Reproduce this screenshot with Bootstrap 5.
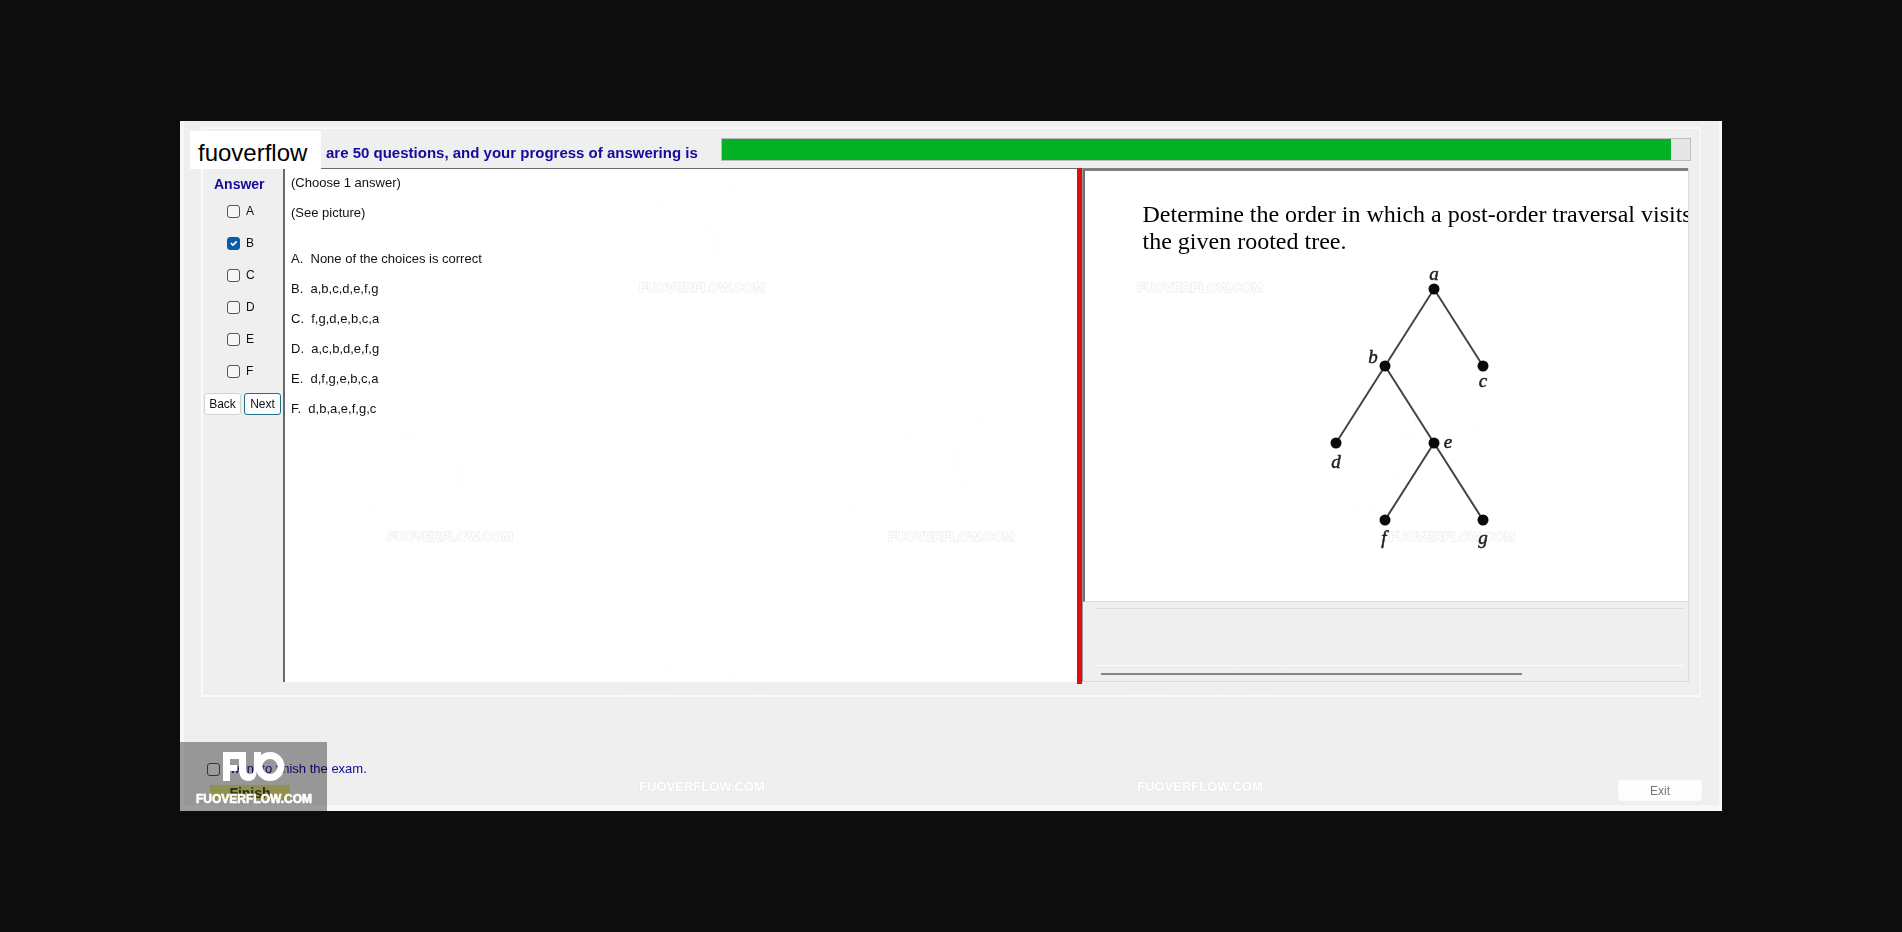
<!DOCTYPE html>
<html lang="en">
<head>
<meta charset="utf-8">
<meta name="viewport" content="width=device-width, initial-scale=1">
<title>Exam client</title>
<link href="https://cdn.jsdelivr.net/npm/bootstrap@5.3.0/dist/css/bootstrap.min.css" rel="stylesheet">
<style>
  body { background: #0d0d0d; font: 13px/16px "Liberation Sans", Arial, sans-serif; color: #111; }
  .stage { padding: 0 180px; }
  .exam-window { background: #efefef; border-left: 4px solid #f8f8f8; border-right: 3px solid #f8f8f8; border-bottom: 6px solid #f8f8f8; }
  .group-box { margin: 6px 18px 0 17px; border: 2px solid #fafafa; border-right-color: #f6f6f6; padding: 0 8px 11px 0; }
  .ink { color: #140a9c; }
  .status-row { height: 39px; padding: 9px 0 0 123px; }
  .status-text { font-size: 15px; line-height: 20px; width: 395px; padding-top: 5px; white-space: nowrap; }
  .progress.answering { height: 23px; border: 1px solid #bcbcbc; border-radius: 0; background: #e6e6e6; }
  .answering .progress-bar { background: #04b024; }
  .brand { left: 6px; top: 10px; width: 131px; height: 38px; background: #fff; font-size: 24px; line-height: 44px; padding-left: 8px; color: #000; }
  .work-row { min-height: 516px; padding-right: 2px; }
  .side { width: 80px; padding-left: 1px; }
  .side h2 { font-size: 14px; line-height: 20px; margin: 6px 0 1px; padding-left: 10px; }
  .choice { height: 32px; padding-left: 23px; gap: 6px; font-size: 12px; }
  .form-check-input.tick { width: 13px; height: 13px; margin: 0; border: 1px solid #555; border-radius: 3px; background-color: #f6f6f6; }
  .form-check-input.tick:checked { background-color: #0b5ba8; border-color: #0b5ba8; }
  .btn.flat { font-size: 12px; line-height: 14px; padding: 3px 0; border-radius: 3px; background: #fdfdfd; border: 1px solid #d2d2d2; color: #111; }
  .steps { gap: 3px; margin-top: 6px; }
  .btn.step { width: 37px; }
  .btn.step.primary { border-color: #1f6f86; }
  .question { flex: 0 0 53.4%; background: #fff; border-top: 1px solid #6a6a6a; border-left: 2px solid #6a6a6a; margin-bottom: 2px; padding: 4px 0 0 6px; }
  .question p { margin: 0 0 10px; line-height: 20px; white-space: pre; }
  .question .gap-after { margin-bottom: 26px; }
  .splitter { width: 5px; background: #dc1010; }
  .picture-pane { border-left: 1px solid #999; border-right: 1px solid #ddd; border-bottom: 1px solid #ddd; margin-bottom: 2px; min-width: 0; }
  .picture { background: #fff; border-top: 3px solid #808080; border-left: 2px solid #707070; border-bottom: 1px solid #dadada; height: 434px; padding: 30px 0 0 58px; overflow: hidden; }
  .picture p { font: 24px/27px "Liberation Serif", "Times New Roman", serif; color: #000; margin: 0; white-space: nowrap; }
  .tree { display: block; margin: 3px 0 0 176px; }
  .pane-foot { border-top: 1px solid #dcdcdc; margin: 6px 4px 0 13px; height: 58px; border-bottom: 1px solid #fbfbfb; }
  .scroll-line { width: 421px; height: 2px; background: #858585; margin: 7px 0 0 18px; }
  .foot { padding: 64px 17px 4px 23px; }
  .finish { gap: 3px; }
  .finish-btn { font-size: 14px; line-height: 14px; font-weight: bold; border: 0; background: #e6e67e; color: #4a4a1c; width: 80px; height: 15px; padding: 0; margin: 8px 0 0 3px; }
  .exit-btn { width: 84px; height: 21px; margin-top: 19px; border-color: #fafafa !important; color: #777 !important; }
  .logo { left: -4px; bottom: -6px; width: 147px; height: 69px; background: rgba(0,0,0,.37); }
  .marks { left: -4px; top: 0; pointer-events: none; }
  .marks.on-paper { mix-blend-mode: multiply; }
  .marks text { font: bold 13px "Liberation Sans", sans-serif; fill: #fff; stroke: #e6e6e6; stroke-width: 1px; paint-order: stroke; text-anchor: middle; }
</style>
</head>
<body>
<svg width="0" height="0" class="position-absolute" aria-hidden="true">
  <symbol id="fuo" viewBox="0 0 62 30" overflow="visible">
    <path d="M0 0h19v7H7v6h7v6H7v10H0z"/>
    <path d="M16 0h7v17q0 5 4 5t4-5V0h7v10l-4 6q0 13-8 13-10 0-10-12z"/>
    <path fill-rule="evenodd" d="M47 0a14.500 14.500 0 1 1 0 29a14.500 14.500 0 0 1 0-29zm0 7a7.500 7.500 0 1 0 0 15a7.500 7.500 0 0 0 0-15z"/>
  </symbol>
</svg>
<main class="stage min-vh-100 d-flex align-items-center">
  <div class="exam-window position-relative flex-grow-1">
    <div class="d-flow-root overflow-hidden">
    <section class="group-box">
      <div class="status-row d-flex">
        <strong class="status-text ink flex-shrink-0">are 50 questions, and your progress of answering is</strong>
        <div class="progress answering flex-grow-1" role="progressbar" aria-label="Answering progress" aria-valuenow="98" aria-valuemin="0" aria-valuemax="100">
          <div class="progress-bar" style="width:98%"></div>
        </div>
      </div>
      <div class="work-row d-flex align-items-stretch">
        <aside class="side flex-shrink-0">
          <h2 class="ink fw-bold">Answer</h2>
          <label class="choice d-flex align-items-center"><input class="form-check-input tick" type="checkbox">A</label>
          <label class="choice d-flex align-items-center"><input class="form-check-input tick" type="checkbox" checked>B</label>
          <label class="choice d-flex align-items-center"><input class="form-check-input tick" type="checkbox">C</label>
          <label class="choice d-flex align-items-center"><input class="form-check-input tick" type="checkbox">D</label>
          <label class="choice d-flex align-items-center"><input class="form-check-input tick" type="checkbox">E</label>
          <label class="choice d-flex align-items-center"><input class="form-check-input tick" type="checkbox">F</label>
          <div class="steps d-flex"><button type="button" class="btn flat step">Back</button><button type="button" class="btn flat step primary">Next</button></div>
        </aside>
        <article class="question">
          <p>(Choose 1 answer)</p>
          <p class="gap-after">(See picture)</p>
          <p>A.  None of the choices is correct</p>
          <p>B.  a,b,c,d,e,f,g</p>
          <p>C.  f,g,d,e,b,c,a</p>
          <p>D.  a,c,b,d,e,f,g</p>
          <p>E.  d,f,g,e,b,c,a</p>
          <p>F.  d,b,a,e,f,g,c</p>
        </article>
        <div class="splitter flex-shrink-0"></div>
        <div class="picture-pane flex-grow-1">
          <div class="picture">
            <p>Determine the order in which a post-order traversal visits</p>
            <p>the given rooted tree.</p>
            <svg class="tree" width="220" height="300" viewBox="1318 258 220 300" role="img" aria-label="Rooted tree with vertices a to g">
              <g stroke="#444" stroke-width="2"><path fill="none" d="M1335 443L1433 289L1482 366M1384 366L1482 520M1433 443L1384 520"/></g>
              <g fill="#0a0a0a"><circle cx="1433" cy="289" r="5.500"/><circle cx="1384" cy="366" r="5.500"/><circle cx="1482" cy="366" r="5.500"/><circle cx="1335" cy="443" r="5.500"/><circle cx="1433" cy="443" r="5.500"/><circle cx="1384" cy="520" r="5.500"/><circle cx="1482" cy="520" r="5.500"/></g>
              <g font-family="Liberation Serif, serif" font-style="italic" font-size="19" fill="#222" stroke="#222" stroke-width=".5" text-anchor="middle"><text x="1433" y="280">a</text><text x="1372" y="363">b</text><text x="1482" y="387">c</text><text x="1335" y="468">d</text><text x="1447" y="448">e</text><text x="1383" y="544">f</text><text x="1482" y="544">g</text></g>
            </svg>
          </div>
          <div class="pane-foot"></div>
          <div class="scroll-line"></div>
        </div>
      </div>
    </section>
    <footer class="foot d-flex justify-content-between align-items-start">
      <div>
        <label class="finish ink d-flex align-items-center"><input class="form-check-input tick" type="checkbox">I want to finish the exam.</label>
        <button type="button" class="finish-btn d-block">Finish</button>
      </div>
      <button type="button" class="btn flat exit-btn">Exit</button>
    </footer>
    </div>
    <svg class="marks on-paper position-absolute" width="1542" height="690" aria-hidden="true">
      <g fill="none" stroke="#000" stroke-opacity=".009" stroke-width=".5">
        <use href="#fuo" x="424" y="60" width="205" height="98"/><use href="#fuo" x="170" y="294" width="205" height="98"/><use href="#fuo" x="671" y="294" width="205" height="98"/><use href="#fuo" x="1172" y="294" width="205" height="98"/><use href="#fuo" x="424" y="545" width="205" height="98"/><use href="#fuo" x="924" y="545" width="205" height="98"/>
      </g>
      <text x="522" y="171">FUOVERFLOW.COM</text><text x="1020" y="171">FUOVERFLOW.COM</text>
      <text x="270" y="420">FUOVERFLOW.COM</text><text x="771" y="420">FUOVERFLOW.COM</text><text x="1272" y="420">FUOVERFLOW.COM</text>
    </svg>
    <svg class="marks position-absolute" width="1542" height="690" aria-hidden="true">
      <text x="522" y="670">FUOVERFLOW.COM</text><text x="1020" y="670">FUOVERFLOW.COM</text>
    </svg>
    <div class="brand position-absolute">fuoverflow</div>
    <svg class="logo position-absolute" viewBox="0 0 147 69" role="img" aria-label="FUOVERFLOW.COM">
      <use href="#fuo" x="43" y="10" width="62" height="30" fill="#fff"/>
      <text x="74" y="61" text-anchor="middle" font-family="Liberation Sans, sans-serif" font-weight="bold" font-size="12" fill="#fff" stroke="#fff" stroke-width=".6">FUOVERFLOW.COM</text>
    </svg>
  </div>
</main>
<script src="https://cdn.jsdelivr.net/npm/bootstrap@5.3.0/dist/js/bootstrap.bundle.min.js"></script>
</body>
</html>
